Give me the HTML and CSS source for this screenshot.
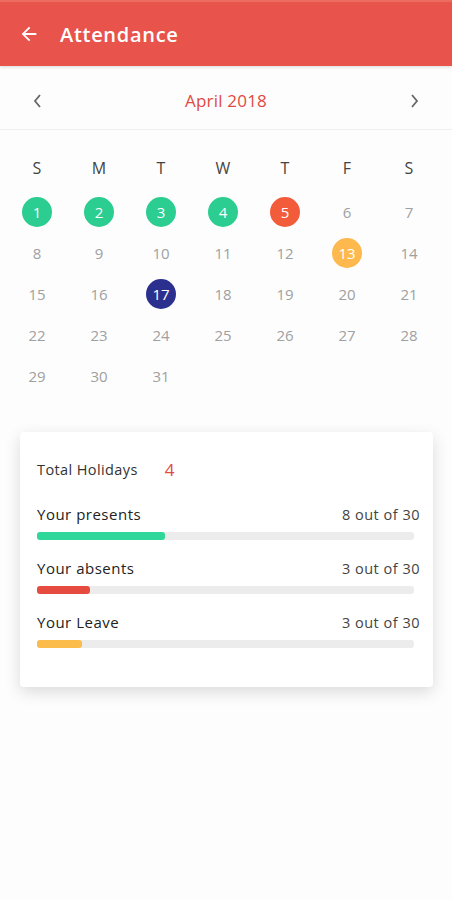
FILE: index.html
```html
<!DOCTYPE html>
<html lang="en">
<head>
  <meta charset="UTF-8">
  <meta name="viewport" content="width=device-width, initial-scale=1.0">
  <title>Attendance</title>
  <link rel="stylesheet" href="styles.css">
</head>
<body>

  <!-- App Bar -->
  <header class="appbar">
    <svg class="back-icon" viewBox="0 0 24 24" width="22" height="22">
      <path d="M20 11H7.83l5.59-5.59L12 4l-8 8 8 8 1.41-1.41L7.83 13H20v-2z" fill="#fff"/>
    </svg>
    <span class="appbar-title">Attendance</span>
  </header>

  <!-- Month Switcher -->
  <div class="month-bar">
    <svg class="chevron" viewBox="0 0 10 16" width="10" height="16">
      <path d="M8 2 L3 8 L8 14" fill="none" stroke="#666" stroke-width="1.8"/>
    </svg>
    <span class="month-title">April 2018</span>
    <svg class="chevron" viewBox="0 0 10 16" width="10" height="16">
      <path d="M2 2 L7 8 L2 14" fill="none" stroke="#666" stroke-width="1.8"/>
    </svg>
  </div>

  <!-- Calendar -->
  <div class="calendar">
    <div class="weekday">S</div>
    <div class="weekday">M</div>
    <div class="weekday">T</div>
    <div class="weekday">W</div>
    <div class="weekday">T</div>
    <div class="weekday">F</div>
    <div class="weekday">S</div>

    <div class="day"><span class="mark present">1</span></div>
    <div class="day"><span class="mark present">2</span></div>
    <div class="day"><span class="mark present">3</span></div>
    <div class="day"><span class="mark present">4</span></div>
    <div class="day"><span class="mark absent">5</span></div>
    <div class="day">6</div>
    <div class="day">7</div>

    <div class="day">8</div>
    <div class="day">9</div>
    <div class="day">10</div>
    <div class="day">11</div>
    <div class="day">12</div>
    <div class="day"><span class="mark leave">13</span></div>
    <div class="day">14</div>

    <div class="day">15</div>
    <div class="day">16</div>
    <div class="day"><span class="mark today">17</span></div>
    <div class="day">18</div>
    <div class="day">19</div>
    <div class="day">20</div>
    <div class="day">21</div>

    <div class="day">22</div>
    <div class="day">23</div>
    <div class="day">24</div>
    <div class="day">25</div>
    <div class="day">26</div>
    <div class="day">27</div>
    <div class="day">28</div>

    <div class="day">29</div>
    <div class="day">30</div>
    <div class="day">31</div>
  </div>

  <!-- Summary Card -->
  <div class="card">
    <div class="holidays">
      <span>Total Holidays</span>
      <span class="holidays-count">4</span>
    </div>

    <div class="stat">
      <div class="stat-row">
        <span>Your presents</span>
        <span class="stat-value">8 out of 30</span>
      </div>
      <div class="bar"><div class="bar-fill green" style="width: 34%"></div></div>
    </div>

    <div class="stat">
      <div class="stat-row">
        <span>Your absents</span>
        <span class="stat-value">3 out of 30</span>
      </div>
      <div class="bar"><div class="bar-fill red" style="width: 14%"></div></div>
    </div>

    <div class="stat">
      <div class="stat-row">
        <span>Your Leave</span>
        <span class="stat-value">3 out of 30</span>
      </div>
      <div class="bar"><div class="bar-fill yellow" style="width: 12%"></div></div>
    </div>
  </div>

</body>
</html>
```

FILE: styles.css
```css
/* General Styles */
body {
  font-family: 'Open Sans', sans-serif;
  background-color: #fdfdfd;
  color: #333;
  margin: 0;
  padding: 0;
  min-height: 100vh;
}

/* App Bar */
.appbar {
  display: flex;
  align-items: center;
  height: 66px;
  padding-left: 18px;
  background-color: #e8534c;
  border-top: 2px solid #ee6b62;
  box-sizing: border-box;
  box-shadow: 0 1px 3px rgba(0, 0, 0, 0.15);
}

.back-icon {
  margin-right: 20px;
}

.appbar-title {
  color: #fff;
  font-size: 20px;
  font-weight: 600;
  letter-spacing: 0.7px;
}

/* Month Switcher */
.month-bar {
  display: flex;
  align-items: center;
  justify-content: space-between;
  height: 64px;
  padding: 6px 32px 0;
  box-sizing: border-box;
  border-bottom: 1px solid #f0f0f0;
}

.month-title {
  color: #e04a42;
  font-size: 17px;
  letter-spacing: 0.2px;
}

/* Calendar */
.calendar {
  display: grid;
  grid-template-columns: repeat(7, 62px);
  grid-auto-rows: 41px;
  padding: 20px 6px 0;
}

.weekday {
  display: flex;
  align-items: center;
  justify-content: center;
  margin-bottom: 5px;
  font-size: 16px;
  color: #444;
}

.day {
  display: flex;
  align-items: center;
  justify-content: center;
  font-size: 15px;
  color: #a0a0a0;
}

.mark {
  display: flex;
  align-items: center;
  justify-content: center;
  width: 30px;
  height: 30px;
  border-radius: 50%;
  color: #fff;
}

.mark.present { background-color: #2ccd90; }
.mark.absent  { background-color: #f25c3b; }
.mark.leave   { background-color: #fdb94d; }
.mark.today   { background-color: #2b2f8e; }

/* Summary Card */
.card {
  margin: 36px 19px 0 20px;
  height: 255px;
  padding: 27px 13px 0 17px;
  box-sizing: border-box;
  background-color: #fff;
  border-radius: 4px;
  box-shadow: 0 5px 16px rgba(0, 0, 0, 0.14);
}

.holidays {
  display: flex;
  align-items: center;
  height: 20px;
  margin-bottom: 25px;
  font-size: 14.5px;
  letter-spacing: 0.4px;
}

.holidays-count {
  margin-left: 27px;
  color: #e04a42;
  font-size: 17px;
}

.stat {
  margin-bottom: 18px;
}

.stat-row {
  display: flex;
  justify-content: space-between;
  align-items: center;
  height: 20px;
  margin-bottom: 8px;
  font-size: 15px;
  letter-spacing: 0.5px;
  color: #222;
}

.stat-value {
  font-size: 14.5px;
  color: #444;
}

.bar {
  height: 8px;
  margin-right: 6px;
  background-color: #ececec;
  border-radius: 3px;
}

.bar-fill {
  height: 100%;
  border-radius: 3px;
}

.bar-fill.green  { background-color: #2fd89a; }
.bar-fill.red    { background-color: #e54b3f; }
.bar-fill.yellow { background-color: #fcbc4c; }
```
